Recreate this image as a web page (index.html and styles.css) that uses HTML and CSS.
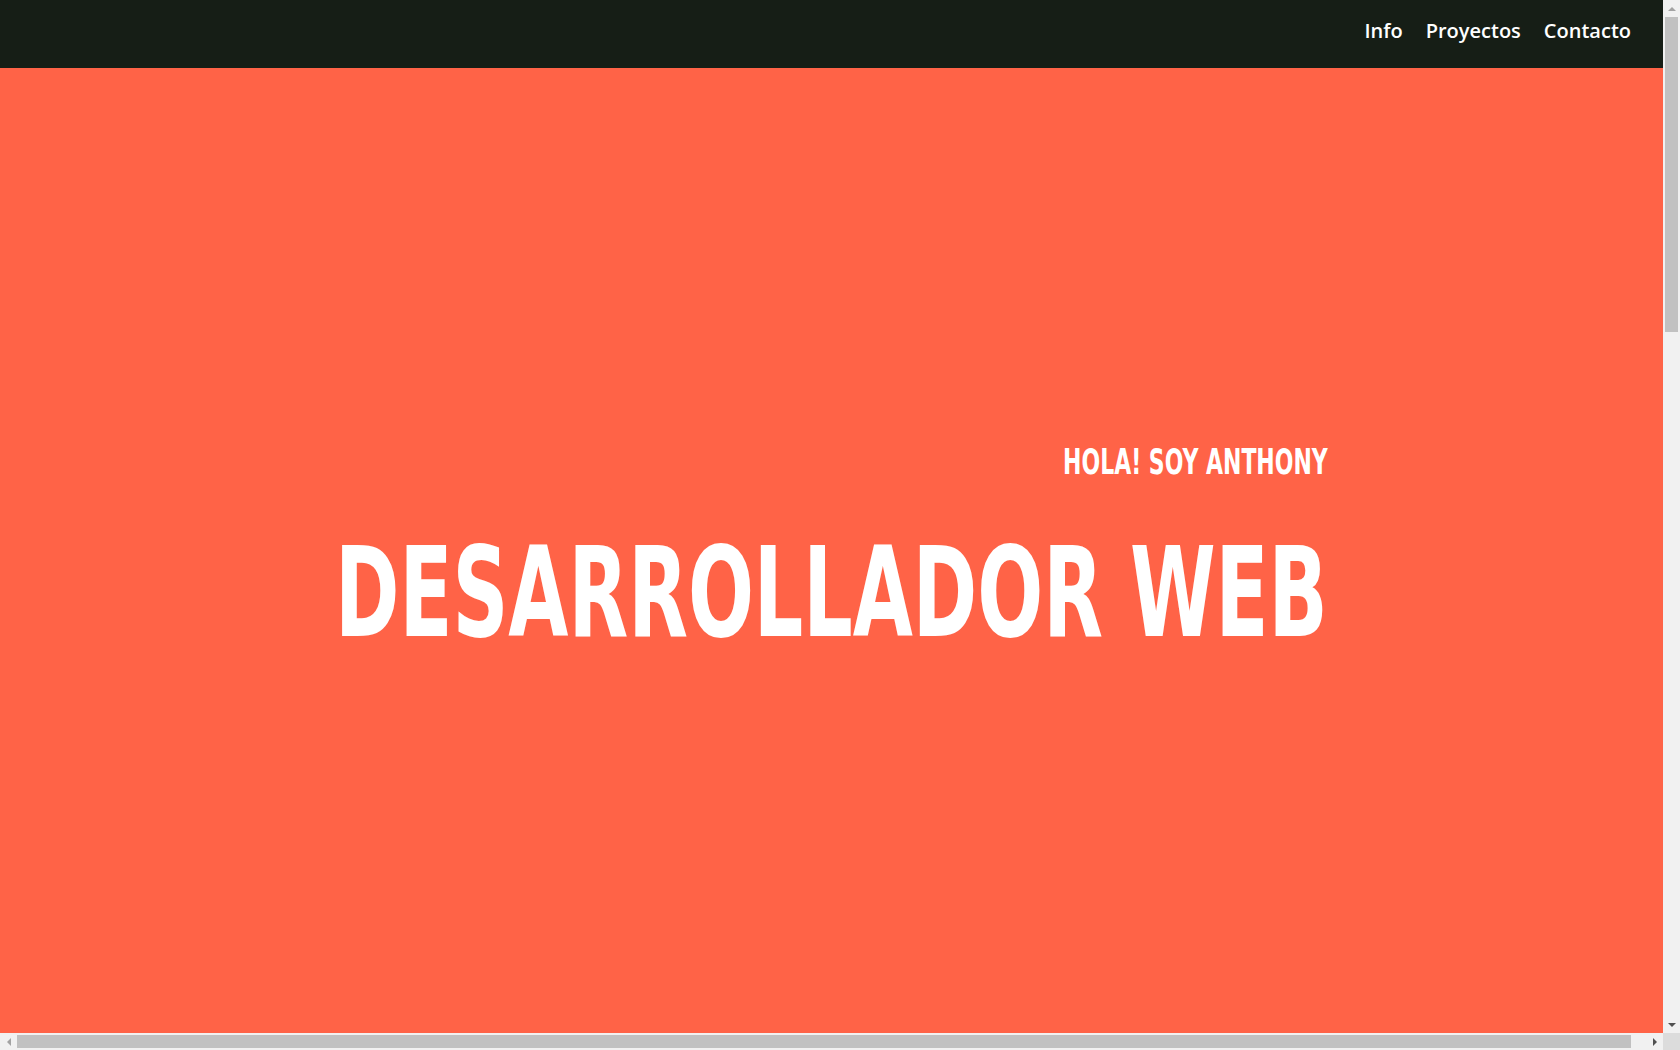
FILE: index.html
```html
<!DOCTYPE html>
<html lang="es">
<head>
<meta charset="utf-8">
<title>Anthony - Desarrollador Web</title>
<link rel="stylesheet" href="styles.css">
</head>
<body>
<div class="viewport">
  <header class="topbar">
    <nav class="menu">
      <a class="menu-link" href="#info">Info</a>
      <a class="menu-link" href="#proyectos">Proyectos</a>
      <a class="menu-link" href="#contacto">Contacto</a>
    </nav>
  </header>
  <main>
    <section class="hero">
      <div class="hero-inner">
        <h2 class="hero-hello">HOLA! SOY ANTHONY</h2>
        <h1 class="hero-title">DESARROLLADOR WEB</h1>
      </div>
    </section>
    <section class="section" id="info"></section>
    <section class="section" id="proyectos"></section>
    <section class="section" id="contacto"></section>
  </main>
</div>
<div class="vscroll" aria-hidden="true">
  <span class="arrow arrow-up"></span>
  <div class="vtrack"><div class="vthumb"></div></div>
  <span class="arrow arrow-down"></span>
</div>
<div class="hscroll" aria-hidden="true">
  <span class="arrow arrow-left"></span>
  <div class="htrack"><div class="hthumb"></div></div>
  <span class="arrow arrow-right"></span>
</div>
<div class="corner" aria-hidden="true"></div>
</body>
</html>
```
FILE: styles.css
```css
html, body {
  margin: 0;
  padding: 0;
}
body {
  height: 100vh;
  overflow: hidden;
  display: grid;
  grid-template-columns: 1fr 17px;
  grid-template-rows: 1fr 17px;
  background: #ff6347;
  font-family: "Open Sans", "Liberation Sans", sans-serif;
}
.viewport {
  grid-column: 1;
  grid-row: 1;
  overflow: hidden;
  min-width: 0;
  min-height: 0;
}
.topbar {
  background: #161e16;
  height: 68px;
  box-sizing: border-box;
  padding: 17px 32px 0 0;
}
.menu {
  display: flex;
  justify-content: flex-end;
  gap: 23px;
}
.menu-link {
  color: #ffffff;
  text-decoration: none;
  font-size: 20px;
  font-weight: 600;
  letter-spacing: 0;
}
.hero {
  background: #ff6347;
  height: 1050px;
  box-sizing: border-box;
  padding-top: 376px;
  display: flex;
  justify-content: center;
  align-items: flex-start;
}
.hero-inner {
  display: flex;
  flex-direction: column;
  align-items: flex-end;
  transform: scaleX(0.69);
  color: #ffffff;
  font-family: "DejaVu Sans Condensed", "DejaVu Sans", sans-serif;
  font-weight: 700;
}
.hero-hello {
  margin: 0 0 51px 0;
  font-size: 35.4px;
  line-height: 1;
  font-weight: 700;
}
.hero-title {
  margin: 0;
  font-size: 125px;
  line-height: 1;
  font-weight: 700;
  white-space: nowrap;
}
.section {
  height: 720px;
  background: #ff6347;
}

/* scrollbars */
.vscroll {
  grid-column: 2;
  grid-row: 1;
  background: #f1f1f1;
  display: flex;
  flex-direction: column;
  align-items: center;
}
.hscroll {
  grid-column: 1;
  grid-row: 2;
  background: #f1f1f1;
  display: flex;
  align-items: center;
}
.corner {
  grid-column: 2;
  grid-row: 2;
  background: #dcdcdc;
}
.vtrack {
  flex: 1;
  width: 100%;
  box-sizing: border-box;
  padding: 0 2px;
}
.vthumb {
  height: 315px;
  background: #c1c1c1;
}
.htrack {
  flex: 1;
  height: 100%;
  box-sizing: border-box;
  padding: 2px 0;
}
.hthumb {
  height: 100%;
  width: 1614px;
  background: #c1c1c1;
}
.arrow {
  width: 17px;
  height: 17px;
  flex: none;
  display: flex;
  align-items: center;
  justify-content: center;
}
.arrow::before {
  content: "";
  width: 0;
  height: 0;
  border-style: solid;
}
.arrow-up::before {
  border-width: 0 4px 4px 4px;
  border-color: transparent transparent #a3a3a3 transparent;
}
.arrow-down::before {
  border-width: 4px 4px 0 4px;
  border-color: #505050 transparent transparent transparent;
}
.arrow-left::before {
  border-width: 4px 4px 4px 0;
  border-color: transparent #a3a3a3 transparent transparent;
}
.arrow-right::before {
  border-width: 4px 0 4px 4px;
  border-color: transparent transparent transparent #505050;
}
```
